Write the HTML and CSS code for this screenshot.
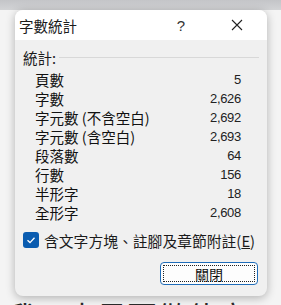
FILE: index.html
```html
<!doctype html>
<html lang="zh-Hant">
  <head>
    <meta charset="utf-8">
    <title>字數統計</title>
    <link rel="stylesheet" href="styles.css">
  </head>
  <body>
    <div class="top-bar"></div>

    <div class="page">
      <!-- Word count dialog -->
      <div class="dialog">
        <div class="dialog-title">
          <span class="title-text">字數統計</span>
          <span class="title-help">?</span>
          <svg class="title-close" viewBox="0 0 12 12" fill="none" stroke="#222" stroke-width="1.1">
            <path d="M1 1 L11 11 M11 1 L1 11"></path>
          </svg>
        </div>

        <div class="dialog-body">
          <div class="group-head">
            <span>統計:</span>
            <div class="group-line"></div>
          </div>

          <ul class="stats">
            <li><span>頁數</span><span class="num">5</span></li>
            <li><span>字數</span><span class="num">2,626</span></li>
            <li><span>字元數 (不含空白)</span><span class="num">2,692</span></li>
            <li><span>字元數 (含空白)</span><span class="num">2,693</span></li>
            <li><span>段落數</span><span class="num">64</span></li>
            <li><span>行數</span><span class="num">156</span></li>
            <li><span>半形字</span><span class="num">18</span></li>
            <li><span>全形字</span><span class="num">2,608</span></li>
          </ul>

          <label class="check-row">
            <span class="checkbox">
              <svg viewBox="0 0 16 16" fill="none" stroke="white" stroke-width="1.3">
                <path d="M4.5 8.3 L7 10.6 L11.5 5.8"></path>
              </svg>
            </span>
            <span>含文字方塊、註腳及章節附註(<u>E</u>)</span>
          </label>

          <div class="actions">
            <button class="btn"><span class="btn-focus">關閉</span></button>
          </div>
        </div>
      </div>

      <!-- document behind the dialog, only its top edge shows -->
      <div class="doc">
        <p class="doc-text">我原本是要做什麼</p>
      </div>
    </div>
  </body>
</html>
```

FILE: styles.css
```css
* {
  margin: 0;
  padding: 0;
  box-sizing: border-box;
}

body {
  width: 281px;
  height: 305px;
  overflow: hidden;
  background: #f4f4f4;
  font-family: "Noto Sans CJK TC", "Noto Sans", sans-serif;
  color: #1b1b1b;
}

.top-bar {
  height: 10px;
  background: linear-gradient(180deg, #c4c5c8 0%, #d3d4d6 100%);
}

.page {
  padding-left: 15px;
}

.dialog {
  width: 252px;
  height: 286px;
  background: #f0f0f0;
  border-radius: 8px;
  box-shadow: 0 2px 10px rgba(0, 0, 0, 0.28);
  overflow: hidden;
  display: flex;
  flex-direction: column;
}

.dialog-title {
  height: 30px;
  background: #ffffff;
  display: flex;
  align-items: center;
  padding-left: 4px;
  font-size: 14.5px;
}

.title-text {
  flex: 1;
}

.title-help {
  font-family: "Liberation Sans", sans-serif;
  font-size: 15px;
  margin-right: 46px;
  color: #333;
}

.title-close {
  width: 12px;
  height: 12px;
  margin-right: 24px;
}

.dialog-body {
  padding: 7px 8px 0 8px;
}

.group-head {
  display: flex;
  align-items: center;
  height: 20px;
  font-size: 14.5px;
  margin-bottom: 3px;
}

.group-line {
  flex: 1;
  height: 1px;
  background: #d8d8d8;
  margin-left: 3px;
}

.stats {
  list-style: none;
  padding: 0 18px 0 12px;
}

.stats li {
  display: flex;
  justify-content: space-between;
  align-items: center;
  height: 19px;
  font-size: 14.5px;
  color: #111;
}

.num {
  font-family: "Liberation Sans", sans-serif;
  font-size: 13px;
  letter-spacing: -0.3px;
  color: #222;
}

.check-row {
  display: flex;
  align-items: center;
  gap: 5px;
  margin-top: 10px;
  height: 16px;
  font-size: 14.8px;
}

.checkbox {
  width: 16px;
  height: 16px;
  border-radius: 3px;
  background: #0a5cb0;
  display: flex;
}

.checkbox svg {
  width: 16px;
  height: 16px;
}

.actions {
  display: flex;
  justify-content: flex-end;
  margin-top: 14px;
}

.btn {
  width: 98px;
  height: 23px;
  padding: 2px;
  border: 1px solid #1f6cb8;
  border-radius: 4px;
  background: #fdfdfd;
  font-family: inherit;
  font-size: 14px;
  color: #111;
  margin-right: 1px;
}

.btn-focus {
  display: flex;
  align-items: center;
  justify-content: center;
  height: 100%;
  border: 1px dotted #222;
}

.doc {
  height: 9px;
  margin-left: -8px;
  width: 274px;
  overflow: hidden;
}

.doc-text {
  font-family: "Noto Sans CJK TC", serif;
  font-size: 30px;
  line-height: 1;
  color: #2a2a2a;
  white-space: nowrap;
  padding-top: 4px;
}
```
